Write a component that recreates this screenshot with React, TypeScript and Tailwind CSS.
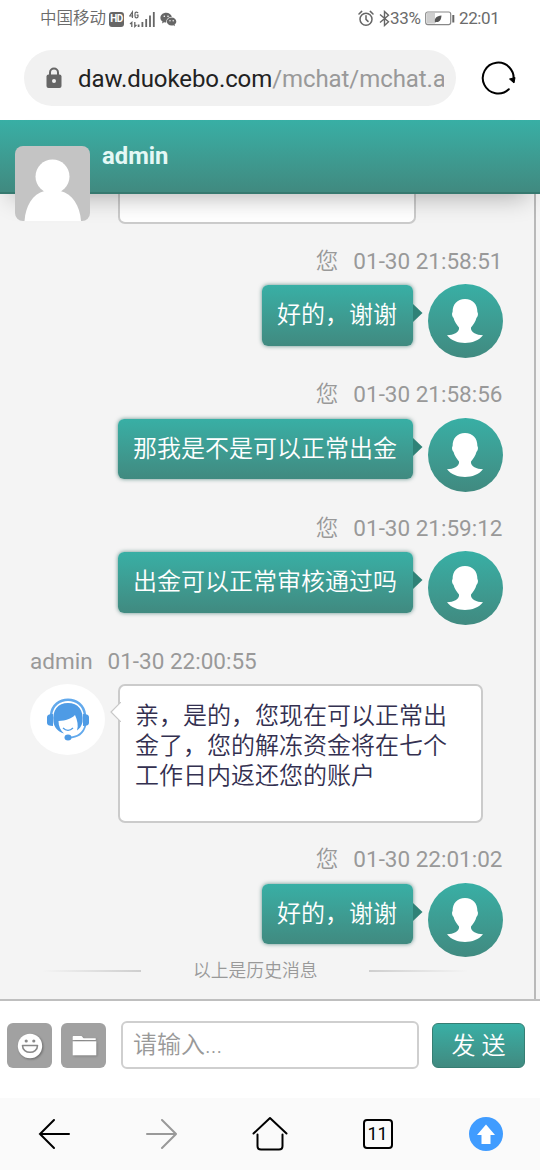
import type { ReactNode } from "react";

type Message = {
  from: "me" | "admin";
  time: string;
  text: string;
};

const messages: Message[] = [
  { from: "me", time: "01-30 21:58:51", text: "好的，谢谢" },
  { from: "me", time: "01-30 21:58:56", text: "那我是不是可以正常出金" },
  { from: "me", time: "01-30 21:59:12", text: "出金可以正常审核通过吗" },
  { from: "admin", time: "01-30 22:00:55", text: "亲，是的，您现在可以正常出金了，您的解冻资金将在七个工作日内返还您的账户" },
  { from: "me", time: "01-30 22:01:02", text: "好的，谢谢" },
];

function StatusBar() {
  return (
    <div className="flex h-[38px] shrink-0 items-center justify-between pl-10 pr-[39px] text-[17px] leading-none text-[#6b6b6b]">
      <div className="flex items-center">
        <span className="w-[67px] whitespace-nowrap font-[350] text-[16.5px]">中国移动</span>
        <span className="ml-[2px] flex h-[15px] w-[15px] items-center justify-center rounded-[3px] bg-[#666] text-[10px] font-bold tracking-[-0.5px] text-white">HD</span>
        <svg className="ml-[5px]" width="26" height="18" viewBox="0 0 26 18" fill="none" stroke="#666">
          <path d="M3.4 8V2L.7 6h3.6M9 3.2C8.6 1.6 6 1.6 6 3.6v2.6c0 2.3 3 2.1 3 .3V5.2H7.6" strokeWidth="1.2" />
          <path d="M2.8 17v-4.500L1 14M5.800 12v4.500L7.500 15" strokeWidth="1.3" />
          <path d="M9.6 14.5V17M13.4 12v5M17.2 9v8M21 5.5V17M24.8 2v15" strokeWidth="1.800" />
        </svg>
        <svg className="ml-[5px]" width="17" height="15" viewBox="0 0 17 15" fill="#666">
          <path d="M6.2.8C2.9.8.4 3 .4 5.7c0 1.6.8 2.9 2.1 3.8L2 11.4l2.1-1.1c.7.2 1.4.3 2.2.3C6 7.300 8.400 5 11.900 4.800 11.300 2.500 9 .8 6.200.8z" />
          <path d="M11.600 5.600c-2.700 0-4.800 1.800-4.800 4s2.100 4 4.800 4c.6 0 1.200-.1 1.700-.3l1.700.9-.5-1.500c1.100-.7 1.800-1.800 1.800-3.100 0-2.200-2.100-4-4.700-4z" />
          <g fill="#fff"><circle cx="4.300" cy="4.300" r=".8" /><circle cx="8" cy="4.300" r=".8" /><circle cx="10" cy="8.700" r=".7" /><circle cx="13.200" cy="8.700" r=".7" /></g>
        </svg>
      </div>
      <div className="-mt-px flex items-center">
        <svg width="16" height="17" viewBox="0 0 16 17" fill="none" stroke="#666" strokeWidth="1.500" strokeLinecap="round">
          <circle cx="8" cy="9.200" r="6" />
          <path d="M8 5.800v3.600l2 2M1 4l2.700-2.600M15 4l-2.700-2.600" />
        </svg>
        <svg className="ml-[5px]" width="11" height="17" viewBox="0 0 11 17" fill="none" stroke="#666" strokeWidth="1.400">
          <path d="M1 4.500l8.500 7.300-4 3.700v-14l4 3.700L1 12.500" />
        </svg>
        <span className="w-[33px] whitespace-nowrap tracking-[-0.3px]">33%</span>
        <svg className="ml-[2px]" width="30" height="15" viewBox="0 0 30 15">
          <rect x=".7" y="1" width="25" height="12.600" rx="2" fill="none" stroke="#888" strokeWidth="1.200" />
          <path d="M2 2h8v10.600H2z" fill="#cecece" />
          <path d="M10 11.500c-.8-4.500 1.500-6.500 6.500-7-.3 4.500-2 7-5.200 6.500z" fill="#555" />
          <path d="M27.300 4h2v7.500h-2z" fill="#666" />
        </svg>
        <span className="ml-[4px] w-[42px] whitespace-nowrap tracking-[-0.400px]">22:01</span>
      </div>
    </div>
  );
}

function AddressBar() {
  return (
    <div className="flex h-[82px] shrink-0 items-start pl-6 pt-3">
      <div className="flex h-14 w-[432px] items-center rounded-full bg-[#f1f1f1] pl-[22px] pr-3">
        <svg className="shrink-0" width="16" height="22" viewBox="0 0 16 22">
          <path d="M4 9V5.500a4 4 0 0 1 8 0V9" fill="none" stroke="#666" strokeWidth="2" />
          <rect x=".5" y="7.500" width="15" height="13.500" rx="2" fill="#666" />
          <circle cx="8" cy="14" r="2" fill="#f1f1f1" />
        </svg>
        <div className="ml-4 mt-px w-[368px] overflow-hidden whitespace-nowrap text-[24px] leading-8 tracking-[-0.080px] text-[#222]">
          daw.duokebo.com<span className="text-[#999]">/mchat/mchat.a</span>
        </div>
      </div>
      <svg className="ml-[25px] mt-[11px]" width="35" height="35" viewBox="0 0 35 35">
        <path d="M27.800 28.200A15.400 15.400 0 1 1 32.300 20" fill="none" stroke="#000" strokeWidth="2" strokeLinecap="round" />
        <path d="M28.500 18l5.500-1.500-1 5.500z" fill="#000" stroke="#000" strokeLinejoin="round" />
      </svg>
    </div>
  );
}

function ChatHeader() {
  return (
    <div className="relative z-10 h-[74px] shrink-0 border-b-2 border-[#36796f] bg-linear-to-b from-[#38afa5] to-[#408a80] pl-[102px] pt-[21px] shadow-[0_14px_26px_-12px_rgba(0,0,0,0.32)]">
      <div className="text-[23.800px] font-bold leading-[30px] text-[#e4f8f5]">admin</div>
      <svg className="absolute left-[15px] top-[26px] rounded-lg" width="75" height="75" viewBox="0 0 75 75">
        <rect width="75" height="75" fill="#c4c4c4" />
        <circle cx="37.500" cy="30.500" r="17" fill="#fff" />
        <path d="M9.500 75c1-15 8-27 20-30h16c12 3 19.500 15 20.500 30z" fill="#fff" />
      </svg>
    </div>
  );
}

function UserAvatar() {
  return (
    <div className="flex h-[74px] w-[75px] shrink-0 items-center justify-center rounded-[50%] bg-linear-to-b from-[#38afa5] to-[#408a80]">
      <svg width="38" height="46" viewBox="0 0 38 46" fill="#fff">
        <path d="M19 1C11 1 6.600 6.500 6.600 14 5.400 15.500 6.300 19 7.500 19.800 8.500 24 11 27 13 29.500 13.600 34 8 37 1 37.200 9 47.500 29 47.500 37 37.200 30 37 24.400 34 25 29.500 27 27 29.500 24 30.500 19.800 31.700 19 32.600 15.500 31.400 14 31.400 6.500 27 1 19 1z" />
      </svg>
    </div>
  );
}

function AdminAvatar() {
  return (
    <div className="flex h-[71px] w-[75px] shrink-0 items-center justify-center rounded-[50%] bg-white">
      <svg width="44" height="46" viewBox="0 0 44 46" fill="none">
        <path d="M5 19C7-1.500 37-1.500 39 19" stroke="#62a9ec" strokeWidth="2.500" />
        <path d="M39.500 29c-2 8-8 12.500-17 12.500" stroke="#62a9ec" strokeWidth="1.800" />
        <path d="M7.500 26C6 14 12 7 22 7s16 7 14.500 19c-.8 4-3 7-5.500 8.500 1.500-5 .5-10-2-15.500-4 4-9 5.500-16.500 6 0 5 2 9.500 5.500 12.500-6-2-10-6-10.500-11.500z" fill="#4e9be5" />
        <path d="M7 18c-4 0-6 1-6 3v6c0 2 2 3 6 3zM37 18c4 0 6 1 6 3v6c0 2-2 3-6 3z" fill="#4e9be5" />
        <path d="M17 32c3 3 7 3 10 0" stroke="#4e9be5" strokeWidth="1.300" />
        <ellipse cx="22" cy="41.500" rx="3.500" ry="3" fill="#4e9be5" />
      </svg>
    </div>
  );
}

function MyMessage({ msg }: { msg: Message }) {
  return (
    <div className="flex h-[133.600px] shrink-0 flex-col pr-[31.500px]">
      <div className="flex h-[30px] items-center justify-end gap-[15px] pt-px text-[22.500px] text-[#999]">
        <span className="font-[350]">您</span>
        <span>{msg.time}</span>
      </div>
      <div className="mt-2 flex items-start justify-end">
        <div className="mt-px flex h-[60.500px] items-center rounded-[6px] bg-linear-to-b from-[#38afa5] to-[#408a80] px-[15.500px] text-[24px] font-[350] text-white shadow-[0_0_4px_rgba(0,80,70,0.6)]">
          {msg.text}
        </div>
        <svg className="mr-[5px] mt-5" width="10" height="18" viewBox="0 0 10 18">
          <path d="M0 0l9.500 9L0 18z" fill="#2f8277" />
        </svg>
        <UserAvatar />
      </div>
    </div>
  );
}

function AdminMessage({ msg }: { msg: Message }) {
  return (
    <div className="flex h-[197.800px] shrink-0 flex-col pl-[30px]">
      <div className="flex h-[30px] items-center gap-[15px] pt-px text-[22.500px] text-[#999]">
        <span>admin</span>
        <span>{msg.time}</span>
      </div>
      <div className="mt-[7px] flex items-start">
        <AdminAvatar />
        <svg className="relative z-10 ml-[4px] mt-[18px]" width="12" height="20" viewBox="0 0 12 20">
          <path d="M12 0L2 10l10 10" fill="#fff" stroke="#c8c8c8" strokeWidth="1.200" />
        </svg>
        <div className="-ml-[3px] h-[139px] w-[365px] rounded-[7px] border-2 border-[#cbcbcb] bg-white pl-[15px] pr-[30px] pt-[15px] text-[24px] font-[350] leading-[30px] text-[#333050]">
          {msg.text}
        </div>
      </div>
    </div>
  );
}

function ToolButton({ children }: { children: ReactNode }) {
  return <button className="flex h-[45px] w-[45px] shrink-0 items-center justify-center rounded-[6px] bg-[#a1a1a1]">{children}</button>;
}

function InputBar() {
  return (
    <div className="flex h-[97px] shrink-0 items-start bg-white pl-[7px] pt-[20px]">
      <div className="mt-[2px] flex gap-[9px]">
        <ToolButton>
          <svg className="ml-px mt-px drop-shadow-[1px_1px_1px_rgba(0,0,0,0.35)]" width="26" height="26" viewBox="0 0 26 26">
            <circle cx="13" cy="13" r="12.200" fill="#fff" />
            <circle cx="9.200" cy="8" r="1.600" fill="#888" />
            <circle cx="16.800" cy="8" r="1.600" fill="#888" />
            <path d="M5.500 12.500h15c0 9-15 9-15 0z" fill="none" stroke="#888" strokeWidth="1.600" strokeLinejoin="round" />
          </svg>
        </ToolButton>
        <ToolButton>
          <svg className="ml-px mt-px drop-shadow-[1px_1px_1px_rgba(0,0,0,0.2)]" width="25" height="22" viewBox="0 0 25 22" fill="#fff">
            <path d="M.7 5V2c0-.6.400-1 1-1h7.500c1 0 1.500 1.700 2.500 2.200h12V5z" />
            <path d="M.7 6.300h23.600v14H.7z" />
          </svg>
        </ToolButton>
      </div>
      <input
        placeholder="请输入..."
        className="ml-[15px] h-[48px] w-[298px] rounded-[6px] border-2 border-[#cfcfcf] bg-white pl-[10px] text-[24px] font-[350] placeholder:text-[#999]"
      />
      <button className="ml-[13px] mt-[2px] h-[45px] w-[93px] rounded-[6px] border border-[#367e73] bg-linear-to-b from-[#38afa5] to-[#408a80] text-[24px] font-[350] text-white">
        发 送
      </button>
    </div>
  );
}

function BrowserNav() {
  return (
    <div className="flex h-[72px] shrink-0 items-center justify-around bg-[#fafafa]">
      <svg width="32" height="32" viewBox="0 0 32 32" fill="none" stroke="#000" strokeWidth="2" strokeLinecap="round">
        <path d="M31 16H2M16 2L2 16l14 14" />
      </svg>
      <svg width="32" height="32" viewBox="0 0 32 32" fill="none" stroke="#999" strokeWidth="2" strokeLinecap="round">
        <path d="M2 16h29M17 2l14 14-14 14" />
      </svg>
      <svg width="36" height="36" viewBox="0 0 36 36" fill="none" stroke="#000" strokeWidth="2" strokeLinecap="round" strokeLinejoin="round">
        <path d="M1.500 17.500L18 2l16.500 15.500M5.500 18.500V30q0 3.500 3.500 3.500h18q3.500 0 3.500-3.500V18.500" />
      </svg>
      <div className="flex h-[30px] w-[30px] items-center justify-center rounded-[4px] border-2 border-black text-[18px] leading-none text-black">11</div>
      <svg className="ml-px" width="34" height="34" viewBox="0 0 34 34">
        <circle cx="17" cy="17" r="17" fill="#409cff" />
        <path d="M17 7.500L26 18h-4.500v9h-9v-9H8z" fill="#fff" />
      </svg>
    </div>
  );
}

export default function App() {
  return (
    <div className="flex h-[1170px] w-[540px] flex-col overflow-hidden bg-white font-['Roboto','Noto_Sans_CJK_SC',sans-serif]">
      <StatusBar />
      <AddressBar />
      <ChatHeader />
      <div className="flex h-[807px] shrink-0 flex-col overflow-hidden border-b-2 border-[#bfbfbf] bg-[#f4f4f4]">
        <div className="flex w-[536px] flex-1 flex-col border-r-2 border-[#b9b9b9]">
          <div className="ml-[118px] h-[30px] w-[298px] shrink-0 rounded-b-[7px] border-2 border-t-0 border-[#cbcbcb] bg-white" />
          <div className="mt-[22px] flex flex-col">
            {messages.map((m) => (m.from === "me" ? <MyMessage key={m.time} msg={m} /> : <AdminMessage key={m.time} msg={m} />))}
          </div>
          {/* history divider sits close under the last bubble */}
          <div className="-mt-[17px] flex h-5 shrink-0 items-center pl-[42px] text-[17.800px] font-[350] text-[#999]">
            <div className="h-[2px] w-[99px] bg-linear-to-l from-[#cecece] to-transparent" />
            <span className="ml-[52px] w-[125px] whitespace-nowrap">以上是历史消息</span>
            <div className="ml-[51px] h-[2px] w-[99px] bg-linear-to-r from-[#cecece] to-transparent" />
          </div>
        </div>
      </div>
      <InputBar />
      <BrowserNav />
    </div>
  );
}
